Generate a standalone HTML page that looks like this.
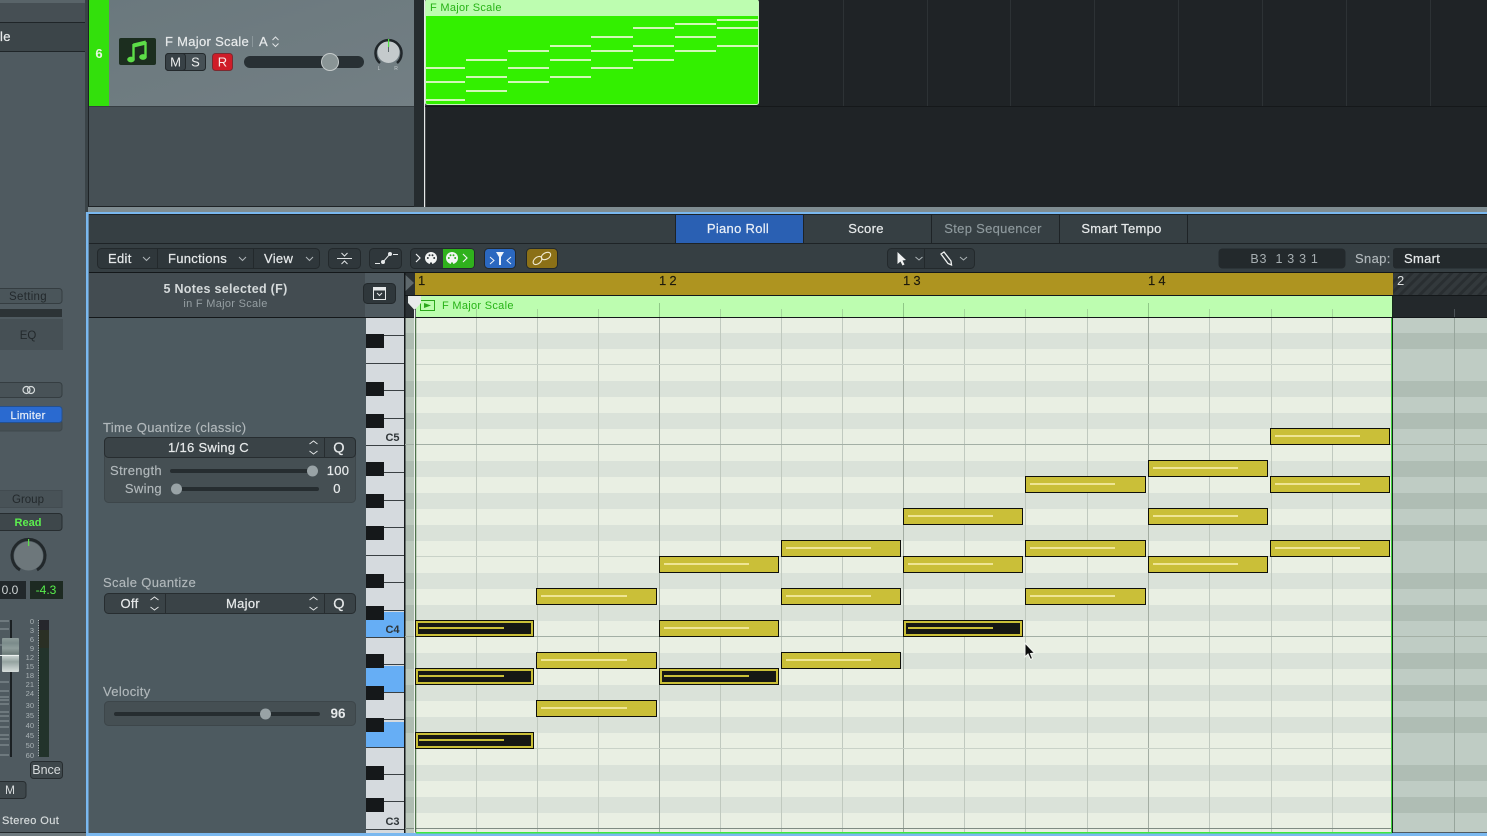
<!DOCTYPE html>
<html><head><meta charset="utf-8"><title>Piano Roll</title>
<style>
html,body{margin:0;padding:0;background:#4f5a60;width:1487px;height:836px;overflow:hidden}
svg{display:block;position:absolute;left:0;top:0;filter:blur(.3px)}
text{font-family:"Liberation Sans",sans-serif}
.w{stroke:#e6e9ea;stroke-width:.22;fill:#e6e9ea;letter-spacing:.3px}
.g{stroke:#b1b8bb;stroke-width:.15;fill:#b1b8bb;letter-spacing:.35px}
</style></head><body>
<svg width="1487" height="836" viewBox="0 0 1487 836" xmlns="http://www.w3.org/2000/svg">
<defs>
<pattern id="h" width="7" height="7" patternUnits="userSpaceOnUse" patternTransform="rotate(45)"><rect width="7" height="7" fill="#33393c"/><rect width="3" height="7" fill="#292e31"/></pattern>
<linearGradient id="tr" x1="0" y1="0" x2="1" y2="1"><stop offset="0" stop-color="#6a787d"/><stop offset="1" stop-color="#737f84"/></linearGradient>
<linearGradient id="cap" x1="0" y1="0" x2="0" y2="1"><stop offset="0" stop-color="#8e9c9b"/><stop offset=".15" stop-color="#7b8b8a"/><stop offset=".3" stop-color="#8f9d9b"/><stop offset=".48" stop-color="#6b7a78"/><stop offset=".52" stop-color="#c9d2d0"/><stop offset=".7" stop-color="#94a3a0"/><stop offset="1" stop-color="#d7dedc"/></linearGradient>
</defs>

<!-- page base -->
<rect width="1487" height="836" fill="#4f5a60"/>

<!-- left mixer strip -->
<rect x="0" y="0" width="85" height="22" fill="#464f54"/>
<rect x="0" y="0" width="85" height="3" fill="#596469"/>
<rect x="0" y="22" width="85" height="1" fill="#1f2528"/>
<rect x="0" y="23" width="85" height="28" fill="#3c4549"/>
<rect x="0" y="51" width="85" height="1" fill="#1f2528"/>
<text x="0" y="41" font-size="13" class="w">le</text>
<rect x="-6" y="288.500" width="68" height="15" rx="3" fill="#4a555a" stroke="#353d41"/>
<text x="28" y="300" font-size="11.500" fill="#23292c" text-anchor="middle" letter-spacing=".3">Setting</text>
<rect x="0" y="309" width="62" height="8" fill="#2c3336"/>
<rect x="0" y="319" width="63" height="31" fill="#465055"/>
<text x="28" y="339" font-size="11.500" fill="#23292c" text-anchor="middle">EQ</text>
<rect x="-6" y="382.500" width="68" height="15" rx="3" fill="#485257" stroke="#353d41"/>
<circle cx="26.500" cy="390" r="3.500" fill="none" stroke="#d5dadb" stroke-width="1.200"/>
<circle cx="31" cy="390" r="3.500" fill="none" stroke="#d5dadb" stroke-width="1.200"/>
<rect x="-6" y="420" width="68" height="11" rx="3" fill="#464f54" stroke="#3f484c"/>
<rect x="-6" y="406.500" width="68" height="16" rx="3" fill="#2a6ad0" stroke="#24508f"/>
<text x="28" y="419" font-size="11" fill="#e8eef8" text-anchor="middle" stroke="#e8eef8" stroke-width=".2" letter-spacing=".3">Limiter</text>
<rect x="-1" y="490.500" width="63" height="17" fill="#485257" stroke="#424b50"/>
<text x="28" y="503" font-size="11.500" fill="#23292c" text-anchor="middle">Group</text>
<rect x="-6" y="513.500" width="68" height="17" rx="3" fill="#3e474b" stroke="#272d30"/>
<text x="28" y="526" font-size="11" fill="#5cf04e" text-anchor="middle" font-weight="bold">Read</text>
<circle cx="28.500" cy="556" r="14.500" fill="#6d777b"/>
<path d="M20 570 A16.500 16.500 0 1 1 37 570" fill="none" stroke="#22282b" stroke-width="3"/>
<rect x="28" y="539" width="1.200" height="7" fill="#5ce04a"/>
<rect x="0" y="581" width="26" height="18" fill="#22282b"/>
<text x="10" y="594" font-size="12" fill="#cfd4d5" text-anchor="middle">0.0</text>
<rect x="30" y="581" width="33" height="18" fill="#1d2a22"/>
<text x="46" y="594" font-size="12" fill="#58ef4c" text-anchor="middle">-4.3</text>

<!-- mixer fader -->
<path d="M0 621H9M0 629H9M0 645H9M0 682H9M0 691H9M0 697H9M0 700H9M0 704H9M0 712H9M0 716H9M0 721H9M0 727H9M0 735H9M0 739H9M0 745H9M0 755H9" stroke="#8d989c" stroke-width="1"/>
<rect x="10" y="620" width="2" height="137" fill="#1b2023"/>
<rect x="2" y="638" width="17" height="34" rx="1" fill="url(#cap)"/>
<rect x="0" y="655" width="19" height="1" fill="#eef2f1"/>
<rect x="39" y="620" width="10" height="137" fill="#22332b"/>
<rect x="39" y="620" width="10" height="10" fill="#26272c"/>
<rect x="39" y="630" width="10" height="18" fill="#2a2f24"/>
<path d="M38.500 620V757" stroke="#b5bdbf" stroke-width="1" stroke-dasharray="1 1.500"/>
<g font-size="7.500" fill="#a9b2b5" text-anchor="end">
<text x="34" y="624">0</text><text x="34" y="633">3</text><text x="34" y="642">6</text><text x="34" y="651">9</text><text x="34" y="660">12</text><text x="34" y="669">15</text><text x="34" y="678">18</text><text x="34" y="687">21</text><text x="34" y="696">24</text><text x="34" y="708">30</text><text x="34" y="718">35</text><text x="34" y="728">40</text><text x="34" y="738">45</text><text x="34" y="748">50</text><text x="34" y="758">60</text>
</g>
<rect x="30.500" y="761.500" width="32" height="17" rx="3" fill="#3e474b" stroke="#272d30"/>
<text x="46.500" y="774" font-size="12.500" fill="#d7dbdc" text-anchor="middle">Bnce</text>
<rect x="-6" y="781.500" width="32" height="17" rx="3" fill="#3e474b" stroke="#272d30"/>
<text x="10" y="794" font-size="12" fill="#d7dbdc" text-anchor="middle">M</text>
<text x="2" y="824" font-size="11" fill="#d5dadb" stroke="#d5dadb" stroke-width=".2" letter-spacing=".4">Stereo Out</text>
<rect x="0" y="833" width="86" height="3" fill="#6d797e"/>
<rect x="0" y="832" width="86" height="1" fill="#23292c"/>

<!-- divider -->
<rect x="85" y="0" width="3" height="212" fill="#3a4347"/>
<rect x="88" y="0" width="1" height="207" fill="#1e2326"/>

<!-- TOP TRACK AREA -->
<rect x="89" y="0" width="325" height="106" fill="url(#tr)"/>
<rect x="89" y="0" width="20" height="106" fill="#33e00c"/>
<rect x="89" y="106" width="325" height="1" fill="#363e42"/>
<rect x="89" y="107" width="325" height="99" fill="#465055"/>
<rect x="89" y="206" width="325" height="1" fill="#1e2326"/>
<text x="99" y="58" font-size="13" fill="#e8f5e2" text-anchor="middle" font-weight="bold">6</text>
<rect x="119" y="38" width="37" height="27" rx="2" fill="#1c2e1f"/>
<path d="M133.500 45.500L146 42.500" fill="none" stroke="#5ddd48" stroke-width="4"/>
<path d="M133.500 44V59M145.500 42V56.500" fill="none" stroke="#5ddd48" stroke-width="2.400"/>
<ellipse cx="131" cy="59.500" rx="3.800" ry="2.900" fill="#5ddd48"/>
<ellipse cx="143" cy="57" rx="3.800" ry="2.900" fill="#5ddd48"/>
<text x="165" y="46" font-size="13" class="w">F Major Scale</text>
<rect x="252" y="36" width="1" height="11" fill="#8b979b"/>
<text x="259" y="46" font-size="13" class="w">A</text>
<path d="M272.500 40L275.500 37L278.500 40M272.500 43.500L275.500 46.500L278.500 43.500" fill="none" stroke="#dfe3e4" stroke-width="1"/>
<rect x="165.500" y="53.500" width="40" height="17" rx="3" fill="#465055" stroke="#23292c"/>
<rect x="165.500" y="53.500" width="20" height="17" rx="3" fill="#384146" stroke="#23292c"/>
<text x="175.500" y="66.500" font-size="13" fill="#eef0f0" text-anchor="middle">M</text>
<text x="195.500" y="66.500" font-size="13" fill="#eef0f0" text-anchor="middle">S</text>
<rect x="212.500" y="53.500" width="20" height="17" rx="3" fill="#cf1c28" stroke="#7a2a30"/>
<text x="222.500" y="66.500" font-size="13" fill="#fbeaea" text-anchor="middle">R</text>
<rect x="244" y="56" width="120" height="12" rx="6" fill="#283034"/>
<circle cx="330" cy="62" r="8.500" fill="#8a9596" stroke="#c5cbcb" stroke-width="1"/>
<circle cx="388.500" cy="52" r="11" fill="#c4cacc"/>
<path d="M380 63 A13 13 0 1 1 397 63" fill="none" stroke="#20262a" stroke-width="2.500"/>
<rect x="388" y="39" width="1.200" height="8" fill="#4fe040"/>
<rect x="388" y="47" width="1" height="5" fill="#596468"/>
<text x="379" y="70" font-size="5" fill="#c5cbcd" text-anchor="middle">L</text>
<text x="396" y="70" font-size="5" fill="#c5cbcd" text-anchor="middle">R</text>

<rect x="414" y="0" width="10" height="207" fill="#262c2f"/>
<rect x="425" y="0" width="1062" height="207" fill="#1f2326"/>
<rect x="424" y="0" width="1.200" height="207" fill="#e6e9e9"/>
<rect x="425" y="106" width="1062" height="1" fill="#15181a"/>
<path d="M843.500 0V106M927.500 0V106M1010.500 0V106M1094.500 0V106M1178.500 0V106M1262.500 0V106M1346.500 0V106M1430.500 0V106" stroke="#2d3235" stroke-width="1"/>

<!-- top region -->
<rect x="425.500" y="0" width="333" height="104.500" rx="2" fill="#33f000" stroke="#c7f5bc" stroke-width="1"/>
<rect x="426" y="0" width="332" height="16" fill="#bdfdb0"/>
<text x="430" y="11" font-size="11" fill="#27b316" letter-spacing=".3">F Major Scale</text>
<g fill="#d2f8b8">
<rect x="426" y="67" width="39" height="2"/><rect x="426" y="81" width="39" height="2"/><rect x="426" y="99" width="39" height="2"/>
<rect x="466" y="59" width="41" height="2"/><rect x="466" y="76" width="41" height="2"/><rect x="466" y="90" width="41" height="2"/>
<rect x="508" y="50" width="41" height="2"/><rect x="508" y="67" width="41" height="2"/><rect x="508" y="81" width="41" height="2"/>
<rect x="550" y="45" width="41" height="2"/><rect x="550" y="59" width="41" height="2"/><rect x="550" y="76" width="41" height="2"/>
<rect x="591" y="36" width="42" height="2"/><rect x="591" y="50" width="42" height="2"/><rect x="591" y="67" width="42" height="2"/>
<rect x="633" y="27" width="41" height="2"/><rect x="633" y="45" width="41" height="2"/><rect x="633" y="59" width="41" height="2"/>
<rect x="675" y="23" width="41" height="2"/><rect x="675" y="36" width="41" height="2"/><rect x="675" y="50" width="41" height="2"/>
<rect x="717" y="19" width="41" height="2"/><rect x="717" y="27" width="41" height="2"/><rect x="717" y="45" width="41" height="2"/>
</g>

<!-- gap & blue border -->
<rect x="88" y="207" width="1399" height="5" fill="#7f8c91"/>
<rect x="87" y="212" width="1400" height="2" fill="#7ab8ef"/>
<rect x="86" y="212" width="2.500" height="624" fill="#7ab8ef"/>
<rect x="88" y="833" width="1399" height="3" fill="#7ab8ef"/>

<!-- tabs -->
<rect x="89" y="214" width="1398" height="1" fill="#1e2326"/>
<rect x="89" y="215" width="1398" height="28" fill="#363f43"/>
<rect x="89" y="243" width="1398" height="1" fill="#1e2326"/>
<rect x="676" y="215" width="127" height="28" fill="#2a60b3"/>
<path d="M675.500 215V243M803.500 215V243M931.500 215V243M1059.500 215V243M1187.500 215V243" stroke="#1e2326"/>
<g font-size="13" text-anchor="middle" letter-spacing=".3">
<text x="738" y="233" fill="#eaf0f8" stroke="#eaf0f8" stroke-width=".22">Piano Roll</text>
<text x="866" y="233" fill="#e6e9ea" stroke="#e6e9ea" stroke-width=".22">Score</text>
<text x="993" y="233" fill="#8e999d" stroke="#8e999d" stroke-width=".15">Step Sequencer</text>
<text x="1121.500" y="233" fill="#e6e9ea" stroke="#e6e9ea" stroke-width=".22">Smart Tempo</text>
</g>

<!-- toolbar -->
<rect x="89" y="244" width="1398" height="28" fill="#363f43"/>
<rect x="89" y="272" width="1398" height="1" fill="#14181a"/>
<rect x="97.500" y="248.500" width="222" height="20" rx="4" fill="#2f373b" stroke="#23292c"/>
<path d="M157.500 249V268M253.500 249V268" stroke="#23292c"/>
<g font-size="13">
<text x="108" y="263" class="w">Edit</text><text x="168" y="263" class="w">Functions</text><text x="264" y="263" class="w">View</text>
</g>
<path d="M143 257L146.500 260.500L150 257M239 257L242.500 260.500L246 257M306 257L309.500 260.500L313 257" fill="none" stroke="#aeb5b8" stroke-width="1"/>
<rect x="328.500" y="248.500" width="32" height="20" rx="4" fill="#2f373b" stroke="#23292c"/>
<path d="M337 258.500H352" stroke="#dfe3e4"/>
<path d="M341.500 253L344.500 256L347.500 253M341.500 264L344.500 261L347.500 264" fill="none" stroke="#dfe3e4"/>
<rect x="369.500" y="248.500" width="32" height="20" rx="4" fill="#2f373b" stroke="#23292c"/>
<path d="M375 263.500H380M393 254.500H398M383 262L390 254" fill="none" stroke="#e6e9ea" stroke-width="1"/>
<circle cx="383" cy="262" r="2" fill="#e6e9ea"/><circle cx="390" cy="254" r="2" fill="#e6e9ea"/>
<rect x="410.500" y="248.500" width="64" height="20" rx="4" fill="#2f373b" stroke="#23292c"/>
<path d="M443 249H471a3 3 0 0 1 3 3V265a3 3 0 0 1-3 3H443Z" fill="#2fb11c"/>
<path d="M416 254L420 258L416 262M463 254L467 258L463 262" fill="none" stroke="#f0f2f2" stroke-width="1.200"/>
<circle cx="431" cy="258" r="6" fill="#f2f4f4"/><circle cx="452" cy="258" r="6" fill="#f2f4f4"/>
<g fill="#2f373b"><circle cx="427.800" cy="258" r="1"/><circle cx="429.500" cy="255.300" r="1"/><circle cx="432.500" cy="255.300" r="1"/><circle cx="434.200" cy="258" r="1"/><rect x="430" y="262.500" width="2" height="2"/></g>
<g fill="#2fb11c"><circle cx="448.800" cy="258" r="1"/><circle cx="450.500" cy="255.300" r="1"/><circle cx="453.500" cy="255.300" r="1"/><circle cx="455.200" cy="258" r="1"/><rect x="451" y="262.500" width="2" height="2"/></g>
<rect x="484.500" y="248.500" width="31" height="20" rx="4" fill="#2b68c0" stroke="#23292c"/>
<path d="M490 257L494 260.500L490 264M511 257L507 260.500L511 264" fill="none" stroke="#f0f4fa" stroke-width="1"/>
<path d="M496 252H504L501 257V265H499V257Z" fill="#f0f4fa"/>
<rect x="526.500" y="248.500" width="31" height="20" rx="4" fill="#8b7017" stroke="#23292c"/>
<ellipse cx="537.500" cy="260.500" rx="5" ry="3.200" transform="rotate(-40 537.500 260.500)" fill="none" stroke="#f0ead0" stroke-width="1.100"/>
<ellipse cx="546" cy="256" rx="5" ry="3.200" transform="rotate(-30 546 256)" fill="none" stroke="#f0ead0" stroke-width="1.100"/>
<rect x="887.500" y="248.500" width="87" height="20" rx="4" fill="#2f373b" stroke="#23292c"/>
<path d="M924.500 249V268" stroke="#23292c"/>
<path d="M897.500 252V264L900.500 261.500L902.500 265.500L904.500 264.500L902.500 260.500L906 260Z" fill="#f0f2f2"/>
<path d="M915.500 257L919 260L922.500 257M960 257L963.500 260L967 257" fill="none" stroke="#aeb5b8" stroke-width="1"/>
<path d="M941 254L944 252L951 261L951.500 265L948 263.500Z" fill="none" stroke="#f0f2f2" stroke-width="1.300"/>
<rect x="1218.500" y="248.500" width="127" height="20" rx="4" fill="#23292c"/>
<text x="1284.500" y="263" font-size="12.500" fill="#a6aeb1" text-anchor="middle" letter-spacing=".7" xml:space="preserve">B3  1 3 3 1</text>
<text x="1355" y="263" font-size="13" class="g">Snap:</text>
<rect x="1393" y="248" width="100" height="20.500" rx="3" fill="#23292c"/>
<text x="1404" y="263" font-size="13" class="w">Smart</text>

<!-- INSPECTOR -->
<rect x="89" y="273" width="276" height="44" fill="#434c51"/>
<rect x="89" y="317" width="316" height="1" fill="#14181a"/>
<rect x="89" y="318" width="277" height="515" fill="#4d5a60"/>
<text x="225.500" y="293" font-size="12.500" fill="#d5dadb" text-anchor="middle" font-weight="bold" letter-spacing=".3">5 Notes selected (F)</text>
<text x="225.500" y="307" font-size="11" fill="#969fa3" text-anchor="middle" letter-spacing=".3">in F Major Scale</text>
<rect x="363.500" y="283.500" width="32" height="20" rx="4" fill="#2f373b" stroke="#23292c"/>
<rect x="373.500" y="287.500" width="12" height="12" fill="none" stroke="#e6e9ea"/>
<rect x="373.500" y="287.500" width="12" height="3" fill="#e6e9ea"/>
<path d="M377 293L379.500 295.500L382 293" fill="none" stroke="#e6e9ea"/>

<text x="103" y="432" font-size="13" class="g">Time Quantize (classic)</text>
<rect x="104.500" y="437.500" width="251" height="65" rx="4" fill="#454f53" stroke="#3d464a"/>
<rect x="104.500" y="437.500" width="251" height="20" rx="4" fill="#3a4347" stroke="#272d30"/>
<path d="M324.500 438V457" stroke="#272d30"/>
<text x="208.500" y="452" font-size="13" class="w" text-anchor="middle">1/16 Swing C</text>
<path d="M309.500 444L313.500 441L317.500 444M309.500 451L313.500 454L317.500 451" fill="none" stroke="#e1e4e5" stroke-width="1"/>
<text x="339" y="452.500" font-size="14.500" class="w" text-anchor="middle">Q</text>
<text x="162" y="475" font-size="13" class="g" text-anchor="end">Strength</text>
<rect x="170" y="469" width="148" height="4" rx="2" fill="#262d30"/>
<circle cx="312.500" cy="471" r="5.500" fill="#99a3a6"/>
<text x="338" y="475" font-size="13" class="w" text-anchor="middle">100</text>
<text x="162" y="493" font-size="13" class="g" text-anchor="end">Swing</text>
<rect x="172" y="487" width="147" height="4" rx="2" fill="#262d30"/>
<circle cx="176.500" cy="489" r="5.500" fill="#99a3a6"/>
<text x="337" y="493" font-size="13" class="w" text-anchor="middle">0</text>

<text x="103" y="587" font-size="13" class="g">Scale Quantize</text>
<rect x="104.500" y="593.500" width="251" height="20" rx="4" fill="#3a4347" stroke="#272d30"/>
<path d="M165.500 594V613M324.500 594V613" stroke="#272d30"/>
<text x="129.500" y="608" font-size="13" class="w" text-anchor="middle">Off</text>
<text x="243" y="608" font-size="13" class="w" text-anchor="middle">Major</text>
<path d="M150.500 600L154.500 597L158.500 600M150.500 607L154.500 610L158.500 607M309.500 600L313.500 597L317.500 600M309.500 607L313.500 610L317.500 607" fill="none" stroke="#e1e4e5" stroke-width="1"/>
<text x="339" y="608.500" font-size="14.500" class="w" text-anchor="middle">Q</text>

<text x="103" y="696" font-size="13" class="g">Velocity</text>
<rect x="104.500" y="701.500" width="251" height="24" rx="4" fill="#454f53" stroke="#3d464a"/>
<rect x="114" y="712" width="206" height="4" rx="2" fill="#262d30"/>
<circle cx="265.500" cy="714" r="5.500" fill="#99a3a6"/>
<text x="338" y="718" font-size="13.500" fill="#e6e9ea" text-anchor="middle" font-weight="bold">96</text>

<!-- PIANO KEYS -->
<rect x="366" y="318" width="38" height="515" fill="#d5dade"/>
<rect x="366" y="612" width="38" height="25" fill="#66aef5"/>
<rect x="366" y="666" width="38" height="26" fill="#66aef5"/>
<rect x="366" y="722" width="38" height="25" fill="#66aef5"/>
<path d="M366 335.500H404M366 363.500H404M366 390.500H404M366 418.500H404M366 445.500H404M366 472.500H404M366 500.500H404M366 527.500H404M366 555.500H404M366 582.500H404M366 610.500H404M366 637.500H404M366 664.500H404M366 692.500H404M366 719.500H404M366 747.500H404M366 774.500H404M366 801.500H404M366 829.500H404" stroke="#3a4043" stroke-width="1"/>
<g fill="#15181a">
<rect x="366" y="334" width="18" height="14"/><rect x="366" y="382" width="18" height="14"/><rect x="366" y="414" width="18" height="14"/><rect x="366" y="462" width="18" height="14"/><rect x="366" y="494" width="18" height="14"/><rect x="366" y="526" width="18" height="14"/><rect x="366" y="574" width="18" height="14"/><rect x="366" y="606" width="18" height="14"/><rect x="366" y="654" width="18" height="14"/><rect x="366" y="686" width="18" height="14"/><rect x="366" y="718" width="18" height="14"/><rect x="366" y="766" width="18" height="14"/><rect x="366" y="798" width="18" height="14"/>
</g>
<g font-size="11" font-weight="bold" fill="#2f3538" text-anchor="middle">
<text x="392.500" y="441">C5</text><text x="392.500" y="633">C4</text><text x="392.500" y="825">C3</text>
</g>
<rect x="404" y="273" width="1.500" height="560" fill="#14181a"/>

<!-- narrow column / grid -->
<rect x="405.500" y="273" width="10" height="45" fill="#2a3033"/>
<rect x="405.500" y="318" width="10" height="515" fill="#bcc9bd"/>
<g fill="#aebcb1">
<rect x="405.500" y="333" width="9" height="16"/><rect x="405.500" y="381" width="9" height="16"/><rect x="405.500" y="413" width="9" height="16"/><rect x="405.500" y="461" width="9" height="16"/><rect x="405.500" y="493" width="9" height="16"/><rect x="405.500" y="525" width="9" height="16"/><rect x="405.500" y="573" width="9" height="16"/><rect x="405.500" y="605" width="9" height="16"/><rect x="405.500" y="653" width="9" height="16"/><rect x="405.500" y="685" width="9" height="16"/><rect x="405.500" y="717" width="9" height="16"/><rect x="405.500" y="765" width="9" height="16"/><rect x="405.500" y="797" width="9" height="16"/>
</g>
<rect x="416" y="318" width="976" height="514" fill="#e9efe3"/>
<rect x="1393" y="318" width="94" height="514" fill="#bfccc4"/>
<g fill="#dae2d9">
<rect x="416" y="333" width="976" height="16"/><rect x="416" y="381" width="976" height="16"/><rect x="416" y="413" width="976" height="16"/><rect x="416" y="461" width="976" height="16"/><rect x="416" y="493" width="976" height="16"/><rect x="416" y="525" width="976" height="16"/><rect x="416" y="573" width="976" height="16"/><rect x="416" y="605" width="976" height="16"/><rect x="416" y="653" width="976" height="16"/><rect x="416" y="685" width="976" height="16"/><rect x="416" y="717" width="976" height="16"/><rect x="416" y="765" width="976" height="16"/><rect x="416" y="797" width="976" height="16"/>
</g>
<g fill="#afbdb4">
<rect x="1393" y="333" width="94" height="16"/><rect x="1393" y="381" width="94" height="16"/><rect x="1393" y="413" width="94" height="16"/><rect x="1393" y="461" width="94" height="16"/><rect x="1393" y="493" width="94" height="16"/><rect x="1393" y="525" width="94" height="16"/><rect x="1393" y="573" width="94" height="16"/><rect x="1393" y="605" width="94" height="16"/><rect x="1393" y="653" width="94" height="16"/><rect x="1393" y="685" width="94" height="16"/><rect x="1393" y="717" width="94" height="16"/><rect x="1393" y="765" width="94" height="16"/><rect x="1393" y="797" width="94" height="16"/>
</g>
<path d="M476.500 318V832M537.500 318V832M598.500 318V832M720.500 318V832M781.500 318V832M842.500 318V832M964.500 318V832M1025.500 318V832M1087.500 318V832M1209.500 318V832M1271.500 318V832M1332.500 318V832" stroke="#c0c9bf" stroke-width="1"/>
<path d="M659.500 318V832M903.500 318V832M1148.500 318V832" stroke="#a3ada3" stroke-width="1"/>
<path d="M1454.500 318V832" stroke="#97a59c" stroke-width="1"/>
<path d="M416 364.500H1392M416 556.500H1392M416 748.500H1392" stroke="#c9d2c8" stroke-width="1"/>
<path d="M405 444.500H1487M405 636.500H1487" stroke="#a3afa5" stroke-width="1"/>
<path d="M405 828.500H1392" stroke="#7f8b82" stroke-width="1"/>
<rect x="416" y="832" width="976" height="1.500" fill="#3ee83e"/>
<rect x="1392" y="296" width="1" height="537" fill="#14291a"/>
<rect x="1391" y="318" width="1" height="515" fill="#3fd43f"/>

<!-- RULER -->
<rect x="415" y="273" width="978" height="22" fill="#ae9420"/>
<rect x="1393" y="273" width="94" height="22" fill="url(#h)"/>
<rect x="405" y="295" width="1082" height="1" fill="#14181a"/>
<g font-size="13" fill="#1c1a0c" stroke="#1c1a0c" stroke-width=".15" word-spacing="-.5">
<text x="418" y="285">1</text><text x="659" y="285">1 2</text><text x="903" y="285">1 3</text><text x="1148" y="285">1 4</text>
</g>
<text x="1397" y="285" font-size="13" fill="#d9dcdd">2</text>
<rect x="1393" y="296" width="94" height="21" fill="#23282b"/>
<rect x="416" y="296" width="976" height="21" fill="#bdfdb0"/>
<rect x="405" y="317" width="1082" height="1" fill="#14181a"/>
<path d="M476.500 309V317M537.500 309V317M598.500 309V317M720.500 309V317M781.500 309V317M842.500 309V317M964.500 309V317M1025.500 309V317M1087.500 309V317M1209.500 309V317M1271.500 309V317M1332.500 309V317" stroke="#a3d69a" stroke-width="1"/>
<path d="M659.500 303V317M903.500 303V317M1148.500 303V317" stroke="#8fc887" stroke-width="1"/>
<path d="M1454.500 309V317" stroke="#4b5256" stroke-width="1"/>
<rect x="420.500" y="300.500" width="14" height="10" fill="none" stroke="#2ba81c" stroke-width="1"/>
<path d="M424 303L431 305.500L424 308Z" fill="#2ba81c"/>
<text x="442" y="309" font-size="11" fill="#27b316" letter-spacing=".3">F Major Scale</text>
<path d="M405.500 275L414 283L405.500 291Z" fill="#5e686c"/>
<path d="M408 296H421V303L414.500 310L408 303Z" fill="#e8ebea"/>
<rect x="414" y="310" width="1.200" height="523" fill="#eef1ee"/>
<rect x="415.200" y="318" width="1" height="514" fill="#2f5a2c"/>

<!-- NOTES -->
<g fill="#cabf38" stroke="#0e0f0a" stroke-width="1">
<rect x="536.500" y="588.500" width="120" height="16"/><rect x="536.500" y="652.500" width="120" height="16"/><rect x="536.500" y="700.500" width="120" height="16"/>
<rect x="659.500" y="556.500" width="119" height="16"/><rect x="659.500" y="620.500" width="119" height="16"/>
<rect x="781.500" y="540.500" width="119" height="16"/><rect x="781.500" y="588.500" width="119" height="16"/><rect x="781.500" y="652.500" width="119" height="16"/>
<rect x="903.500" y="508.500" width="119" height="16"/><rect x="903.500" y="556.500" width="119" height="16"/>
<rect x="1025.500" y="476.500" width="120" height="16"/><rect x="1025.500" y="540.500" width="120" height="16"/><rect x="1025.500" y="588.500" width="120" height="16"/>
<rect x="1148.500" y="460.500" width="119" height="16"/><rect x="1148.500" y="508.500" width="119" height="16"/><rect x="1148.500" y="556.500" width="119" height="16"/>
<rect x="1270.500" y="428.500" width="119" height="16"/><rect x="1270.500" y="476.500" width="119" height="16"/><rect x="1270.500" y="540.500" width="119" height="16"/>
</g>
<g fill="#efe594">
<rect x="541" y="595" width="86" height="2"/><rect x="541" y="659" width="86" height="2"/><rect x="541" y="707" width="86" height="2"/>
<rect x="664" y="563" width="85" height="2"/><rect x="664" y="627" width="85" height="2"/>
<rect x="786" y="547" width="85" height="2"/><rect x="786" y="595" width="85" height="2"/><rect x="786" y="659" width="85" height="2"/>
<rect x="908" y="515" width="85" height="2"/><rect x="908" y="563" width="85" height="2"/>
<rect x="1030" y="483" width="85" height="2"/><rect x="1030" y="547" width="85" height="2"/><rect x="1030" y="595" width="85" height="2"/>
<rect x="1153" y="467" width="85" height="2"/><rect x="1153" y="515" width="85" height="2"/><rect x="1153" y="563" width="85" height="2"/>
<rect x="1275" y="435" width="85" height="2"/><rect x="1275" y="483" width="85" height="2"/><rect x="1275" y="547" width="85" height="2"/>
</g>
<!-- selected notes -->
<g fill="#cabf38" stroke="#0e0f0a" stroke-width="1">
<rect x="415.500" y="620.500" width="118" height="16"/><rect x="415.500" y="668.500" width="118" height="16"/><rect x="415.500" y="732.500" width="118" height="16"/>
<rect x="659.500" y="668.500" width="119" height="16"/><rect x="903.500" y="620.500" width="119" height="16"/>
</g>
<g fill="#161714">
<rect x="418" y="623" width="113" height="11"/><rect x="418" y="671" width="113" height="11"/><rect x="418" y="735" width="113" height="11"/>
<rect x="662" y="671" width="114" height="11"/><rect x="906" y="623" width="114" height="11"/>
</g>
<g fill="#cabf38">
<rect x="419" y="627" width="85" height="2"/><rect x="419" y="675" width="85" height="2"/><rect x="419" y="739" width="85" height="2"/>
<rect x="664" y="675" width="85" height="2"/><rect x="908" y="627" width="85" height="2"/>
</g>

<!-- mouse cursor -->
<path d="M1025 643V657L1028 654L1030.500 659.500L1032.500 658.500L1030.500 653.500L1034.500 653Z" fill="#0c0d0d" stroke="#f5f7f3" stroke-width="1"/>
</svg>
</body></html>
